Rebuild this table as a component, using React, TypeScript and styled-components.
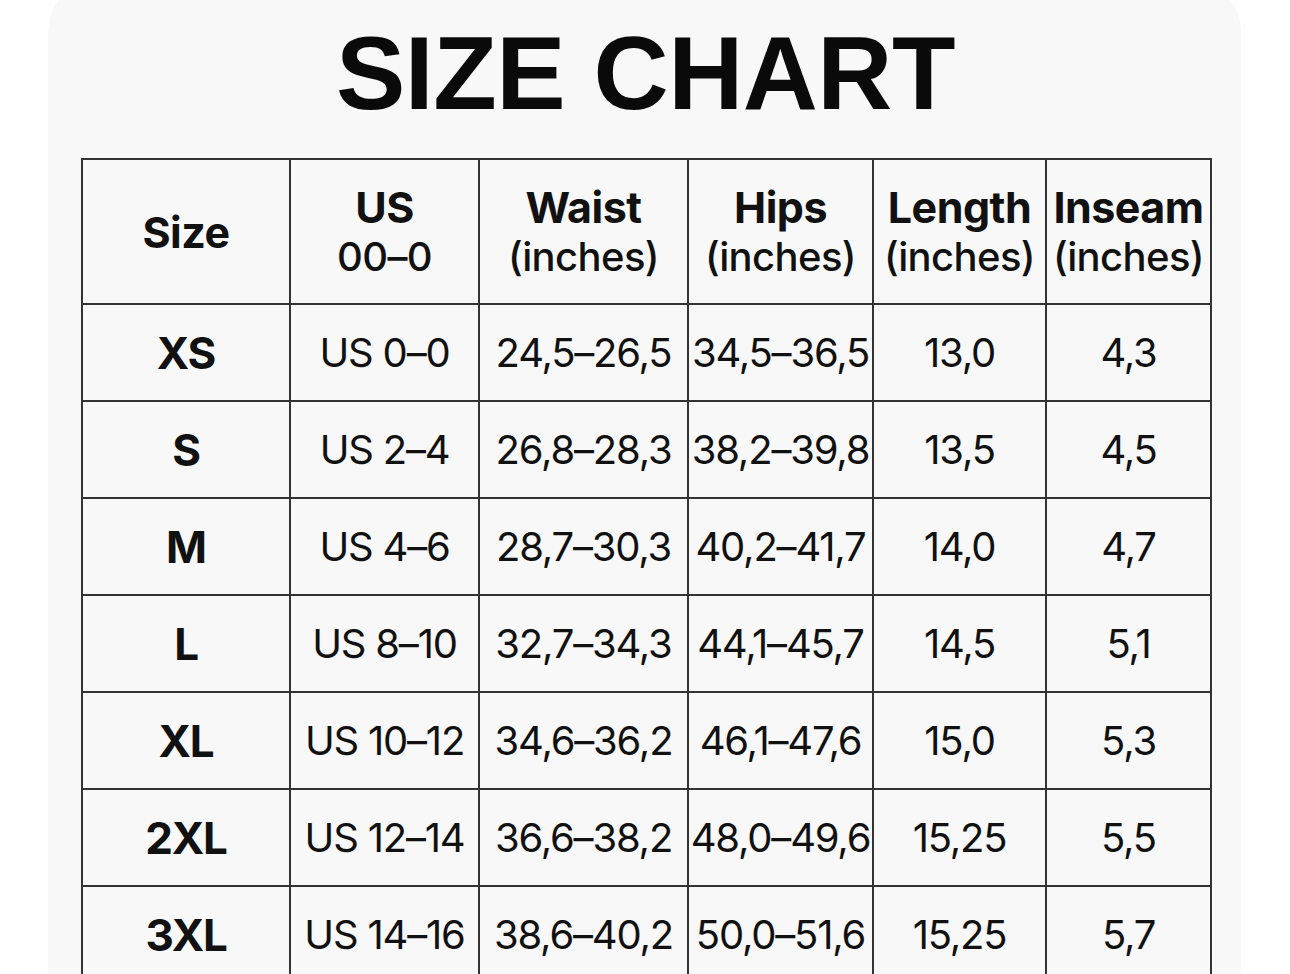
import React from "react";
import styled, { createGlobalStyle } from "styled-components";

const GlobalStyle = createGlobalStyle`
  html, body {
    margin: 0;
    padding: 0;
    background: #ffffff;
    overflow: hidden;
  }
`;

const Page = styled.div`
  width: 1290px;
  height: 974px;
  overflow: hidden;
  background: #ffffff;
`;

const Card = styled.div`
  margin: -26px 0 0 48px;
  width: 1193px;
  height: 1100px;
  padding-top: 43px;
  box-sizing: border-box;
  background: #f8f8f8;
  border-radius: 60px;
  display: flex;
  flex-direction: column;
  align-items: center;
`;

const Title = styled.h1`
  margin: 0 0 0 2px;
  font-family: "Liberation Sans", Arial, sans-serif;
  font-weight: 700;
  font-size: 104px;
  line-height: 112px;
  letter-spacing: -0.5px;
  color: #0a0a0a;
`;

const Table = styled.table`
  margin: 29px 0 0 4px;
  width: 1129px;
  border-collapse: collapse;
  table-layout: fixed;
  font-family: Inter, Roboto, "Liberation Sans", sans-serif;
  color: #111111;

  th,
  td {
    border: 2px solid #333333;
    padding: 0;
    text-align: center;
    vertical-align: middle;
    white-space: nowrap;
  }
`;

const HeadRow = styled.tr`
  height: 145px;
`;

const Row = styled.tr`
  height: 97px;
`;

const HeadCell = styled.th`
  font-size: 43px;
  line-height: 50px;
  font-weight: 700;
  letter-spacing: -0.5px;
`;

const Unit = styled.span`
  display: block;
  font-size: 40px;
  font-weight: 500;
  letter-spacing: -0.6px;
`;

const Cell = styled.td<{ $bold?: boolean }>`
  font-size: ${(p) => (p.$bold ? 44 : 40)}px;
  font-weight: ${(p) => (p.$bold ? 700 : 400)};
  letter-spacing: -1.2px;
  padding-top: 2px;
`;

const columns = [
  { w: 208, name: "Size" },
  { w: 189, name: "US", unit: "00–0" },
  { w: 209, name: "Waist", unit: "(inches)" },
  { w: 185, name: "Hips", unit: "(inches)" },
  { w: 173, name: "Length", unit: "(inches)" },
  { w: 165, name: "Inseam", unit: "(inches)" },
];

const rows = [
  ["XS", "US 0–0", "24,5–26,5", "34,5–36,5", "13,0", "4,3"],
  ["S", "US 2–4", "26,8–28,3", "38,2–39,8", "13,5", "4,5"],
  ["M", "US 4–6", "28,7–30,3", "40,2–41,7", "14,0", "4,7"],
  ["L", "US 8–10", "32,7–34,3", "44,1–45,7", "14,5", "5,1"],
  ["XL", "US 10–12", "34,6–36,2", "46,1–47,6", "15,0", "5,3"],
  ["2XL", "US 12–14", "36,6–38,2", "48,0–49,6", "15,25", "5,5"],
  ["3XL", "US 14–16", "38,6–40,2", "50,0–51,6", "15,25", "5,7"],
];

export default function App() {
  return (
    <Page>
      <GlobalStyle />
      <Card>
        <Title>SIZE CHART</Title>
        <Table>
          <colgroup>
            {columns.map((c) => (
              <col key={c.name} style={{ width: c.w }} />
            ))}
          </colgroup>
          <thead>
            <HeadRow>
              {columns.map((c) => (
                <HeadCell key={c.name}>
                  {c.name}
                  {c.unit && <Unit>{c.unit}</Unit>}
                </HeadCell>
              ))}
            </HeadRow>
          </thead>
          <tbody>
            {rows.map((r) => (
              <Row key={r[0]}>
                {r.map((v, i) => (
                  <Cell key={i} $bold={i === 0}>
                    {v}
                  </Cell>
                ))}
              </Row>
            ))}
          </tbody>
        </Table>
      </Card>
    </Page>
  );
}
